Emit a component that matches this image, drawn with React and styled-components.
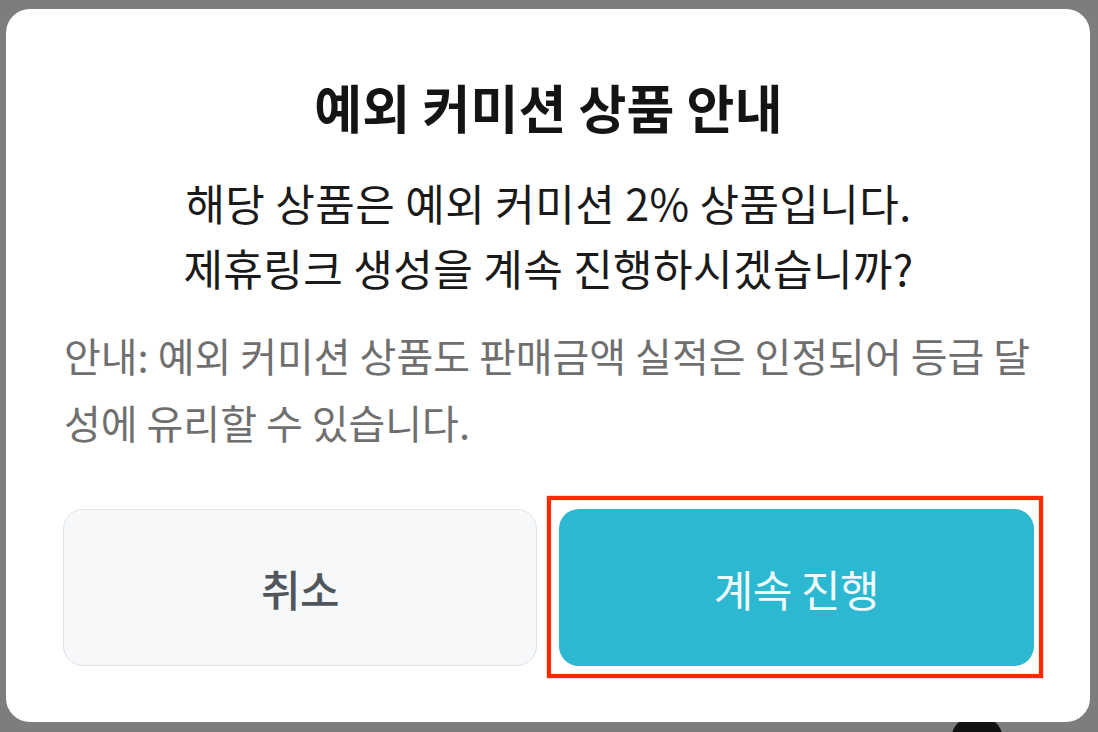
import React from "react";
import styled, { createGlobalStyle } from "styled-components";

const GlobalStyle = createGlobalStyle`
  html, body {
    margin: 0;
    padding: 0;
    background: #7d7d7d;
  }
  body {
    font-family: "Noto Sans CJK KR", "Noto Sans", sans-serif;
  }
  * { box-sizing: border-box; }
`;

const Backdrop = styled.div`
  position: relative;
  width: 1098px;
  height: 732px;
  overflow: hidden;
  background: #7d7d7d;
  padding: 9px 8px 10px 6px;
  display: flex;
`;

const BehindBlob = styled.div`
  position: absolute;
  left: 952px;
  top: 716px;
  width: 50px;
  height: 40px;
  border-radius: 50%;
  background: #111;
`;

const Modal = styled.div`
  position: relative;
  flex: 1;
  background: #ffffff;
  border-radius: 24px;
  padding: 66px 56px 56px 57px;
  display: flex;
  flex-direction: column;
`;

const Title = styled.h1`
  margin: 0;
  text-align: center;
  font-size: 52px;
  line-height: 64px;
  font-weight: 700;
  letter-spacing: 0.2px;
  color: #141414;
`;

const Message = styled.p`
  margin: 31px 0 0;
  text-align: center;
  font-size: 43px;
  line-height: 65px;
  font-weight: 400;
  letter-spacing: 0.4px;
  color: #1a1a1a;
`;

const Note = styled.p`
  margin: 22px 0 0;
  text-align: left;
  font-size: 40px;
  line-height: 67px;
  font-weight: 400;
  color: #6f6f6f;
  padding-left: 1px;
`;

const Actions = styled.div`
  margin-top: auto;
  display: grid;
  grid-template-columns: 474px 475px;
  gap: 22px;
`;

const ButtonBase = styled.button`
  height: 157px;
  border-radius: 20px;
  font-family: inherit;
  font-size: 43px;
  font-weight: 500;
  letter-spacing: -0.5px;
  display: flex;
  align-items: center;
  justify-content: center;
  cursor: pointer;
  width: 100%;
`;

const CancelButton = styled(ButtonBase)`
  background: #f6f8fa;
  border: 1.5px solid #dfe2e6;
  color: #50565c;
`;

const ConfirmButton = styled(ButtonBase)`
  background: #2bb8d0;
  border: none;
  color: #eefafd;
  font-weight: 400;
`;

const Highlight = styled.div`
  position: relative;
`;

const AnnotationBox = styled.div`
  position: absolute;
  top: -13px;
  left: -12px;
  right: -9px;
  bottom: -12px;
  border: 4px solid #ff2a00;
  box-shadow: 0 0 1px #ff2a00, inset 0 0 1px #ff2a00;
  pointer-events: none;
`;

export default function App() {
  return (
    <>
      <GlobalStyle />
      <Backdrop>
        <BehindBlob />
        <Modal>
          <Title>예외 커미션 상품 안내</Title>
          <Message>
            해당 상품은 예외 커미션 2% 상품입니다.
            <br />
            제휴링크 생성을 계속 진행하시겠습니까?
          </Message>
          <Note>
            안내: 예외 커미션 상품도 판매금액 실적은 인정되어 등급 달
            <br />
            성에 유리할 수 있습니다.
          </Note>
          <Actions>
            <CancelButton type="button">취소</CancelButton>
            <Highlight>
              <ConfirmButton type="button">계속 진행</ConfirmButton>
              <AnnotationBox />
            </Highlight>
          </Actions>
        </Modal>
      </Backdrop>
    </>
  );
}
